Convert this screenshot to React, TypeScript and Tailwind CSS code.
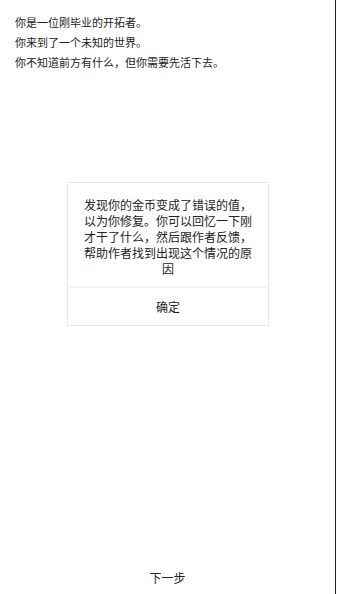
export default function App() {
  const lines = [
    "你是一位刚毕业的开拓者。",
    "你来到了一个未知的世界。",
    "你不知道前方有什么，但你需要先活下去。",
  ];

  return (
    <div
      className="relative flex h-[594px] w-[336px] flex-col border-r border-[#1b1b4b] bg-white text-[#222]"
      style={{ fontFamily: '"Noto Sans CJK SC", "Noto Sans", sans-serif' }}
    >
      {/* Story */}
      <div className="flex flex-col pl-[15px] pt-[12px]">
        {lines.map((l) => (
          <p key={l} className="text-[11px] leading-[20px]">
            {l}
          </p>
        ))}
      </div>

      <div className="flex-1" />

      {/* Next */}
      <div className="flex justify-center pb-[8px]">
        <button className="text-[12px] leading-[16px] text-[#222]">下一步</button>
      </div>

      {/* Dialog */}
      <div className="absolute left-[67px] top-[182px] w-[202px] border border-[#e8e8e8] bg-white">
        <p className="px-[16px] pb-[10px] pt-[14px] text-center text-[12px] leading-[16px]">
          发现你的金币变成了错误的值，以为你修复。你可以回忆一下刚才干了什么，然后跟作者反馈，帮助作者找到出现这个情况的原因
        </p>
        <div className="flex h-[38px] items-center justify-center border-t border-[#eeeeee] text-[12px]">
          确定
        </div>
      </div>
    </div>
  );
}
